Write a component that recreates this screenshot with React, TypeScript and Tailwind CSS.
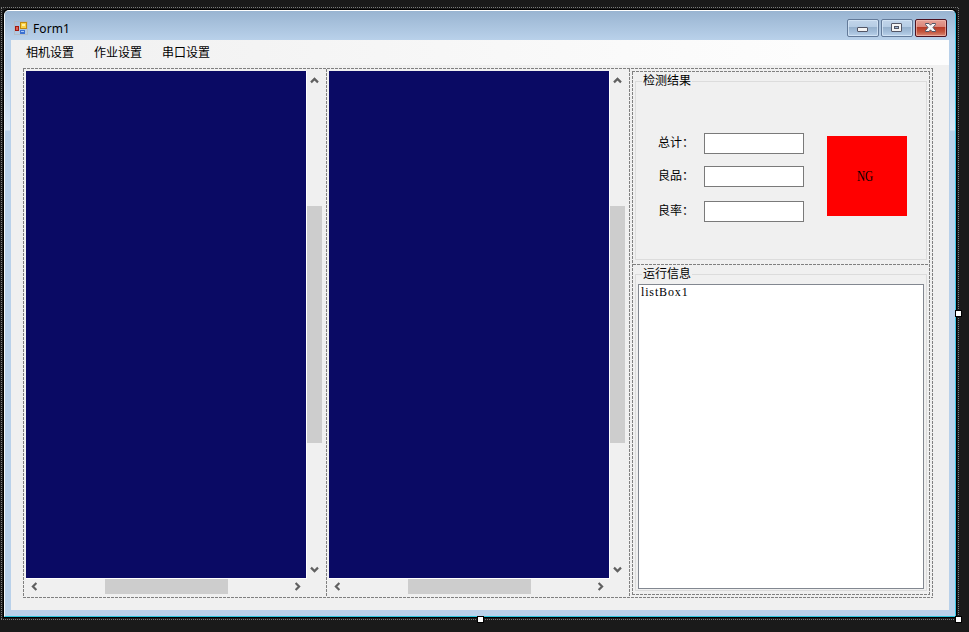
import React from "react";

const hDash = "h-px shrink-0 bg-[repeating-linear-gradient(90deg,#808080_0_3px,transparent_3px_4px)]";
const vDash = "w-px shrink-0 bg-[repeating-linear-gradient(180deg,#808080_0_3px,transparent_3px_4px)]";
const hDot = "h-px shrink-0 bg-[repeating-linear-gradient(90deg,#7c7c7c_0_1px,transparent_1px_2px)]";
const vDot = "w-px shrink-0 bg-[repeating-linear-gradient(180deg,#7c7c7c_0_1px,transparent_1px_2px)]";
const song = "font-['Liberation_Serif','Noto_Sans_CJK_SC',sans-serif]";

function Arrow({ turn }: { turn: string }) {
  return (
    <svg width="9" height="9" viewBox="0 0 9 9" className={`shrink-0 ${turn}`}>
      <path d="M1 6.4 4.5 2.9 8 6.4" fill="none" stroke="#606060" strokeWidth="2.2" />
    </svg>
  );
}

function FormIcon() {
  return (
    <svg width="14" height="14" viewBox="0 0 14 14" className="shrink-0">
      <rect x=".5" y=".5" width="13" height="13" fill="none" stroke="#b4b4b4" opacity=".6" />
      <rect x="6.5" y="1.5" width="6" height="6" fill="#fbd144" stroke="#c08a10" />
      <rect x="8" y="3" width="3" height="2" fill="#ffefa0" />
      <rect x="1.5" y="5.5" width="3" height="4" fill="#e06050" stroke="#a01810" />
      <rect x="6" y="9" width="5" height="4" fill="#3c70d0" />
      <rect x="7" y="10" width="3" height="1" fill="#a8c8f8" />
    </svg>
  );
}

function CaptionButton({ kind }: { kind: "min" | "max" | "close" }) {
  const tone =
    kind === "close"
      ? "border-[#4c1220] bg-[linear-gradient(#e6a095_0%,#d98478_45%,#b83a26_46%,#c4573f_75%,#d98b78_100%)] shadow-[inset_0_0_0_1px_rgba(245,190,180,.65)]"
      : "border-[#637a99] bg-[linear-gradient(#c2d5ea_0%,#b5cce4_45%,#95b0cc_46%,#a5bfdb_75%,#bad2ea_100%)] shadow-[inset_0_0_0_1px_rgba(214,230,246,.8)]";
  return (
    <div className={`flex h-[18px] w-8 items-center justify-center rounded-[2px] border ${tone}`}>
      <svg width="12" height="12" viewBox="0 0 12 12">
        {kind === "min" && <rect x=".5" y="5.5" width="10" height="4" rx=".5" fill="#f4f4f4" stroke="#535666" />}
        {kind === "max" && (
          <>
            <rect x=".5" y="1.5" width="10" height="8" rx=".5" fill="#f4f4f4" stroke="#535666" />
            <rect x="3.5" y="4.5" width="4" height="2" fill="#9cb5d2" stroke="#535666" />
          </>
        )}
        {kind === "close" && (
          <path
            d="M.5 1.5H4L5.5 3.2 7 1.5H10.5V2.5L8 5.5 10.5 8.5V9.5H7L5.5 7.8 4 9.5H.5V8.5L3 5.5.5 2.5Z"
            fill="#f6f6f6"
            stroke="#535666"
          />
        )}
      </svg>
    </div>
  );
}

function ImageView() {
  return (
    <div className="flex h-[527px] w-[299px] shrink-0 flex-col">
      <div className="flex h-[507px] shrink-0">
        <div className="w-[281px] border-r border-white bg-[#0a0a64]" />
        <div className="flex w-[15px] flex-col items-center">
          <div className="pt-[5px]"><Arrow turn="block" /></div>
          <div className="mt-[121px] h-[237px] w-full shrink-0 bg-[#cdcdcd]" />
          <div className="mt-[122px]"><Arrow turn="block rotate-180" /></div>
        </div>
      </div>
      <div className="h-px w-[281px] shrink-0 bg-white" />
      <div className="flex h-[15px] w-[280px] items-center">
        <div className="ml-1"><Arrow turn="-rotate-90" /></div>
        <div className="ml-[66px] h-full w-[123px] bg-[#cdcdcd]" />
        <div className="ml-[65px]"><Arrow turn="rotate-90" /></div>
      </div>
    </div>
  );
}

function Legend({ text }: { text: string }) {
  return (
    <div className="flex h-3 w-[292px] items-center">
      <div className="mt-px w-[7px] border-t border-[#dcdcdc]" />
      <span className={`w-[50px] pl-px text-[12px] leading-[12px] whitespace-nowrap ${song}`}>{text}</span>
      <div className="mt-px flex-1 border-t border-[#dcdcdc]" />
    </div>
  );
}

function Field({ label, gap }: { label: string; gap: string }) {
  return (
    <div className={`flex h-[21px] ${gap}`}>
      <span className={`w-[46px] pt-1 text-[12px] leading-[12px] whitespace-nowrap ${song}`}>{label}</span>
      <div className="h-[21px] w-[100px] border border-[#7a7a7a] bg-white" />
    </div>
  );
}

function Handle({ place }: { place: string }) {
  return <div className={`absolute size-[7px] border border-black bg-white ${place}`} />;
}

export default function App() {
  return (
    <div className="relative h-[632px] w-[969px] overflow-hidden bg-[#1a1a1a] pt-[7px] pl-px text-black">
      <div className="flex h-[613px] w-[958px] flex-col">
        <div className={hDot} />
        <div className="flex h-[611px]">
          <div className={vDot} />
          <div className="h-[611px] w-[956px] pt-px pl-px">
            <div className="h-[609px] w-[954px] rounded-t-[5px] bg-black pt-px pl-px">
              <div className="flex h-[607px] w-[952px] flex-col overflow-hidden rounded-t-[5px] border-t border-r border-b border-l border-t-white border-r-[#38c6e6] border-b-[#2bc4dc] border-l-[#f2f7fc] bg-[#b9d1ea]">
                <div className="flex h-[29px] shrink-0 items-start bg-[linear-gradient(#99b4d1,#b9d1ea)] pt-2 pr-2 pl-[9px]">
                  <div className="pt-[2px]"><FormIcon /></div>
                  <span className="ml-[5px] pt-[3px] font-['Noto_Sans',sans-serif] text-[12px] leading-[14px] tracking-[0.1px]">Form1</span>
                  <div className="ml-auto flex gap-[2px]">
                    <CaptionButton kind="min" />
                    <CaptionButton kind="max" />
                    <CaptionButton kind="close" />
                  </div>
                </div>
                <div className="flex h-[570px] shrink-0">
                  <div className="w-[6px] shrink-0 border-r border-[#b9d1ea] bg-[linear-gradient(#b9d1ea_0,#b9d1ea_20px,#dae7f5_90px,#b9d1ea_91px)]" />
                  <div className="flex h-[570px] w-[938px] shrink-0 flex-col bg-[#f0f0f0]">
                    <div className="flex h-[25px] shrink-0 gap-5 bg-[linear-gradient(90deg,#f0f0f0,#fdfdfd_85%)] pt-[5px] pl-[15px] font-['Noto_Sans_CJK_SC',sans-serif] text-[12px] leading-[14px]">
                      <span>相机设置</span>
                      <span>作业设置</span>
                      <span>串口设置</span>
                    </div>
                    <div className="mt-[3px] ml-3 flex h-[530px] w-[910px] flex-col">
                      <div className={hDash} />
                      <div className="flex h-[528px]">
                        <div className={vDash} />
                        <div className="w-[302px] shrink-0 pt-[2px] pl-[2px]"><ImageView /></div>
                        <div className={vDash} />
                        <div className="w-[302px] shrink-0 pt-[2px] pl-[2px]"><ImageView /></div>
                        <div className={vDash} />
                        <div className="w-[302px] shrink-0 pt-[2px] pl-[2px]">
                          <div className="flex h-[524px] w-[298px] flex-col">
                            <div className={hDash} />
                            <div className="flex h-[522px]">
                              <div className={vDash} />
                              <div className="flex w-[296px] shrink-0 flex-col">
                                <div className="ml-[2px] h-[192px] w-[292px] shrink-0 pt-[3px]">
                                  <Legend text="检测结果" />
                                  <div className="-mt-[5px] flex h-[178px] w-[292px] border-r border-b border-l border-[#dcdcdc]">
                                    <div className="ml-[22px] w-[146px] pt-[51px]">
                                      <Field label="总计：" gap="" />
                                      <Field label="良品：" gap="mt-3" />
                                      <Field label="良率：" gap="mt-[14px]" />
                                    </div>
                                    <div className={`mt-[54px] ml-[23px] flex size-20 items-center justify-center bg-[#ff0000] pr-[3px] text-[14px] ${song}`}>
                                      <span className="inline-block scale-x-[.8]">NG</span>
                                    </div>
                                  </div>
                                </div>
                                <div className={hDash} />
                                <div className="ml-[2px] w-[292px] pt-[3px]">
                                  <Legend text="运行信息" />
                                  <div className="-mt-[5px] h-[316px] border-r border-b border-l border-[#dcdcdc] px-[2px] pt-[9px]">
                                    <div className={`h-[305px] w-[286px] border border-[#828790] bg-white pt-px pl-[2px] text-[12px] leading-3 tracking-[0.85px] ${song}`}>
                                      listBox1
                                    </div>
                                  </div>
                                </div>
                              </div>
                              <div className={vDash} />
                            </div>
                            <div className={hDash} />
                          </div>
                        </div>
                        <div className={vDash} />
                      </div>
                      <div className={hDash} />
                    </div>
                  </div>
                  <div className="w-[6px] shrink-0 border-l border-[#b9d1ea] bg-[linear-gradient(#b9d1ea_0,#b9d1ea_20px,#dae7f5_90px,#b9d1ea_91px)]" />
                </div>
              </div>
            </div>
          </div>
          <div className={vDot} />
        </div>
        <div className={hDot} />
      </div>
      <Handle place="top-[310px] left-[955px]" />
      <Handle place="top-[616px] left-[477px]" />
      <Handle place="top-[616px] left-[955px]" />
    </div>
  );
}
